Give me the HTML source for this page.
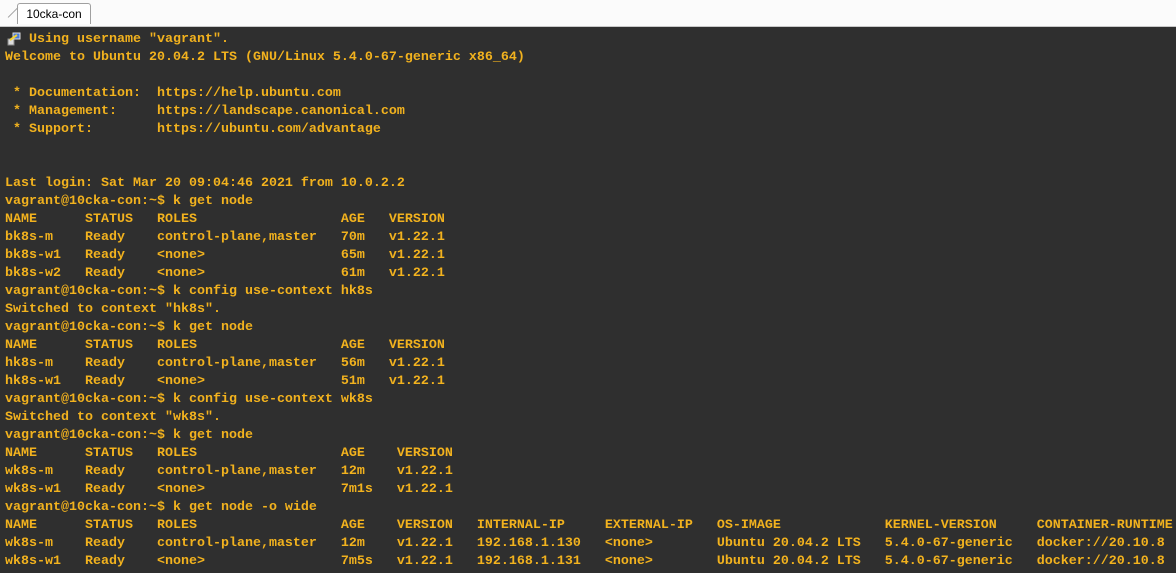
<!DOCTYPE html>
<html><head><meta charset="utf-8"><style>
html,body{margin:0;padding:0;width:1176px;height:573px;overflow:hidden;background:#f0f0f0;}
.top{position:absolute;left:0;top:0;width:1176px;height:26px;background:#fbfbfb;border-bottom:1px solid #c8c8c8;}
.tab{position:absolute;left:17px;top:3px;width:72px;height:20px;background:#fff;border:1px solid #a0a0a0;border-bottom:none;border-radius:3px 3px 0 0;font:12px "Liberation Sans",sans-serif;color:#000;text-align:center;line-height:20px;}
.tab:before{content:"";position:absolute;left:-12px;top:8px;width:14px;height:1px;background:#a0a0a0;transform:rotate(-45deg);}
.term{position:absolute;left:0;top:27px;width:1176px;height:546px;background:#2f2f2f;overflow:hidden;}
pre{position:absolute;left:5px;top:4px;margin:0;font:bold 13.33px/18px "Liberation Mono",monospace;color:#f2b21e;white-space:pre;}
.ic{position:absolute;left:7px;top:5px;width:14px;height:14px;}
</style></head><body>
<div class="top"><div class="tab">10cka-con</div></div>
<div class="term">
<svg class="ic" viewBox="0 0 14 14"><rect x="1" y="7" width="6" height="6" fill="#dcdcdc" stroke="#888" stroke-width="1"/><rect x="6" y="1" width="7" height="6" fill="#4a7bd8" stroke="#ddd" stroke-width="1"/><path d="M3 8 L10 3" stroke="#f2d030" stroke-width="2"/></svg>
<pre>   Using username "vagrant".
Welcome to Ubuntu 20.04.2 LTS (GNU/Linux 5.4.0-67-generic x86_64)

 * Documentation:  https://help.ubuntu.com
 * Management:     https://landscape.canonical.com
 * Support:        https://ubuntu.com/advantage


Last login: Sat Mar 20 09:04:46 2021 from 10.0.2.2
vagrant@10cka-con:~$ k get node
NAME      STATUS   ROLES                  AGE   VERSION
bk8s-m    Ready    control-plane,master   70m   v1.22.1
bk8s-w1   Ready    &lt;none&gt;                 65m   v1.22.1
bk8s-w2   Ready    &lt;none&gt;                 61m   v1.22.1
vagrant@10cka-con:~$ k config use-context hk8s
Switched to context "hk8s".
vagrant@10cka-con:~$ k get node
NAME      STATUS   ROLES                  AGE   VERSION
hk8s-m    Ready    control-plane,master   56m   v1.22.1
hk8s-w1   Ready    &lt;none&gt;                 51m   v1.22.1
vagrant@10cka-con:~$ k config use-context wk8s
Switched to context "wk8s".
vagrant@10cka-con:~$ k get node
NAME      STATUS   ROLES                  AGE    VERSION
wk8s-m    Ready    control-plane,master   12m    v1.22.1
wk8s-w1   Ready    &lt;none&gt;                 7m1s   v1.22.1
vagrant@10cka-con:~$ k get node -o wide
NAME      STATUS   ROLES                  AGE    VERSION   INTERNAL-IP     EXTERNAL-IP   OS-IMAGE             KERNEL-VERSION     CONTAINER-RUNTIME
wk8s-m    Ready    control-plane,master   12m    v1.22.1   192.168.1.130   &lt;none&gt;        Ubuntu 20.04.2 LTS   5.4.0-67-generic   docker://20.10.8
wk8s-w1   Ready    &lt;none&gt;                 7m5s   v1.22.1   192.168.1.131   &lt;none&gt;        Ubuntu 20.04.2 LTS   5.4.0-67-generic   docker://20.10.8
                   &lt;
</pre>
</div>
</body></html>
